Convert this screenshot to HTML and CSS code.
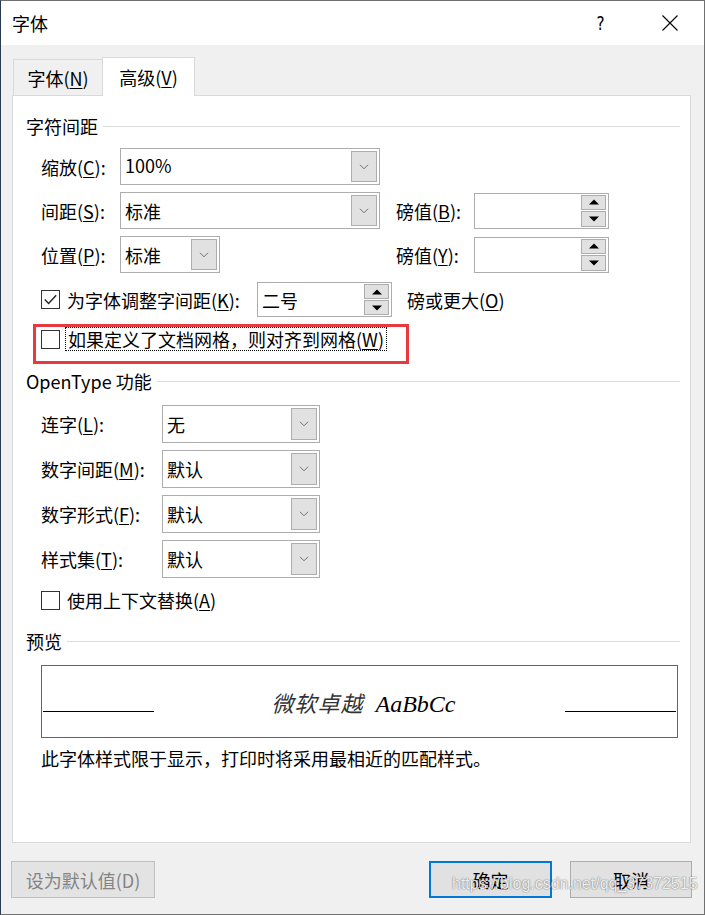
FILE: index.html
```html
<!DOCTYPE html>
<html lang="zh-CN">
<head>
<meta charset="utf-8">
<title>字体</title>
<link rel="stylesheet" href="styles.css">
</head>
<body>
<div class="window">
  <div class="titlebar">
    <span class="title">字体</span>
    <div class="caption-btns">
      <span class="cap-btn help">?</span>
      <span class="cap-btn"><svg width="16" height="16" viewBox="0 0 16 16"><path d="M0.5 0.5 L15.5 15.5 M15.5 0.5 L0.5 15.5" stroke="#000" stroke-width="1.1" fill="none"/></svg></span>
    </div>
  </div>
  <div class="client">
    <div class="tabs">
      <div class="tab">字体(<u>N</u>)</div>
      <div class="tab active">高级(<u>V</u>)</div>
    </div>
    <div class="panel">
      <div class="group-title">字符间距</div>
      <div class="grid1 ind">
        <span class="label">缩放(<u>C</u>):</span>
        <div class="combo"><span class="val edit">100%</span><span class="drop"><svg width="10" height="6" viewBox="0 0 10 6"><path d="M1 0.8 L5 4.8 L9 0.8" stroke="#707070" stroke-width="1" fill="none"/></svg></span></div>
        <span></span><span></span><span></span>

        <span class="label">间距(<u>S</u>):</span>
        <div class="combo"><span class="val">标准</span><span class="drop"><svg width="10" height="6" viewBox="0 0 10 6"><path d="M1 0.8 L5 4.8 L9 0.8" stroke="#707070" stroke-width="1" fill="none"/></svg></span></div>
        <span></span>
        <span class="label">磅值(<u>B</u>):</span>
        <div class="spin"><span class="val"></span><span class="spin-btns"><span class="sbtn"><svg width="10" height="6" viewBox="0 0 10 6"><path d="M0 5.5 L5 0.5 L10 5.5Z" fill="#000"/></svg></span><span class="sbtn"><svg width="10" height="6" viewBox="0 0 10 6"><path d="M0 0.5 L5 5.5 L10 0.5Z" fill="#000"/></svg></span></span></div>

        <span class="label">位置(<u>P</u>):</span>
        <div class="combo short"><span class="val">标准</span><span class="drop"><svg width="10" height="6" viewBox="0 0 10 6"><path d="M1 0.8 L5 4.8 L9 0.8" stroke="#707070" stroke-width="1" fill="none"/></svg></span></div>
        <span></span>
        <span class="label">磅值(<u>Y</u>):</span>
        <div class="spin"><span class="val"></span><span class="spin-btns"><span class="sbtn"><svg width="10" height="6" viewBox="0 0 10 6"><path d="M0 5.5 L5 0.5 L10 5.5Z" fill="#000"/></svg></span><span class="sbtn"><svg width="10" height="6" viewBox="0 0 10 6"><path d="M0 0.5 L5 5.5 L10 0.5Z" fill="#000"/></svg></span></span></div>
      </div>

      <div class="kern-row ind">
        <span class="checkbox"><svg width="17" height="17" viewBox="0 0 17 17"><path d="M2.8 8.6 L6.6 12.4 L14.2 4.2" stroke="#222" stroke-width="1.4" fill="none"/></svg></span>
        <span class="kern-label">为字体调整字间距(<u>K</u>):</span>
        <div class="spin kern"><span class="val">二号</span><span class="spin-btns"><span class="sbtn"><svg width="10" height="6" viewBox="0 0 10 6"><path d="M0 5.5 L5 0.5 L10 5.5Z" fill="#000"/></svg></span><span class="sbtn"><svg width="10" height="6" viewBox="0 0 10 6"><path d="M0 0.5 L5 5.5 L10 0.5Z" fill="#000"/></svg></span></span></div>
        <span class="after-spin">磅或更大(<u>O</u>)</span>
      </div>

      <div class="check-row snap ind">
        <span class="checkbox"></span>
        <span class="focus">如果定义了文档网格，则对齐到网格(<u>W</u>)</span>
      </div>

      <div class="group-title ot">OpenType 功能</div>
      <div class="grid2 ind">
        <span class="label">连字(<u>L</u>):</span>
        <div class="combo"><span class="val">无</span><span class="drop"><svg width="10" height="6" viewBox="0 0 10 6"><path d="M1 0.8 L5 4.8 L9 0.8" stroke="#707070" stroke-width="1" fill="none"/></svg></span></div>
        <span class="label">数字间距(<u>M</u>):</span>
        <div class="combo"><span class="val">默认</span><span class="drop"><svg width="10" height="6" viewBox="0 0 10 6"><path d="M1 0.8 L5 4.8 L9 0.8" stroke="#707070" stroke-width="1" fill="none"/></svg></span></div>
        <span class="label">数字形式(<u>F</u>):</span>
        <div class="combo"><span class="val">默认</span><span class="drop"><svg width="10" height="6" viewBox="0 0 10 6"><path d="M1 0.8 L5 4.8 L9 0.8" stroke="#707070" stroke-width="1" fill="none"/></svg></span></div>
        <span class="label">样式集(<u>T</u>):</span>
        <div class="combo"><span class="val">默认</span><span class="drop"><svg width="10" height="6" viewBox="0 0 10 6"><path d="M1 0.8 L5 4.8 L9 0.8" stroke="#707070" stroke-width="1" fill="none"/></svg></span></div>
      </div>

      <div class="check-row ctx ind">
        <span class="checkbox"></span>
        <span>使用上下文替换(<u>A</u>)</span>
      </div>

      <div class="group-title pv">预览</div>
      <div class="preview ind">
        <span class="pline"></span>
        <span class="ptext"><span class="pcjk">微软卓越</span><span class="plat">AaBbCc</span></span>
        <span class="pline"></span>
      </div>
      <div class="note ind">此字体样式限于显示，打印时将采用最相近的匹配样式。</div>

      <div class="annot"></div>
    </div>
    <div class="footer">
      <span class="btn disabled">设为默认值(D)</span>
      <span class="btn primary">确定</span>
      <span class="btn cancel">取消</span>
    </div>
  </div>
  <div class="watermark">https://blog.csdn.net/qq_37372515</div>
</div>
</body>
</html>
```
FILE: styles.css
```css
* { box-sizing: border-box; }
html, body { margin: 0; padding: 0; }
body {
  width: 705px;
  height: 915px;
  overflow: hidden;
  background: #f0f0f0;
  font-family: "Noto Sans CJK SC", "Noto Sans", sans-serif;
  font-size: 18px;
  line-height: 24px;
  color: #000;
}
u { text-decoration: underline; text-underline-offset: 2px; text-decoration-thickness: 1px; }

.window {
  position: relative;
  width: 705px;
  height: 915px;
  background: #f0f0f0;
  border: 1px solid #707070;
  border-left-color: #2a3a52;
  display: flex;
  flex-direction: column;
}
.titlebar {
  flex: none;
  height: 44px;
  background: #fff;
  display: flex;
  align-items: center;
}
.title { margin-left: 11px; }
.caption-btns { margin-left: auto; display: flex; height: 100%; }
.cap-btn {
  width: 69px;
  display: flex;
  align-items: center;
  justify-content: center;
}
.help { font-family: "DejaVu Sans", sans-serif; font-size: 19px; font-weight: normal; transform: scaleX(0.8); }

.client { flex: 1; display: flex; flex-direction: column; }
.tabs {
  height: 50px;
  display: flex;
  align-items: flex-end;
  padding-left: 12px;
  position: relative;
  z-index: 1;
}
.tab {
  width: 89px;
  height: 36px;
  border: 1px solid #d9d9d9;
  border-right: none;
  border-bottom: none;
  display: flex;
  align-items: center;
  justify-content: center;
}
.tab.active {
  width: 93px;
  height: 39px;
  margin-bottom: -1px;
  background: #fff;
  border-right: 1px solid #d9d9d9;
}

.panel {
  position: relative;
  margin-left: 11px;
  width: 679px;
  height: 748px;
  background: #fff;
  border: 1px solid #d9d9d9;
  padding: 0 10px 0 13px;
}
.group-title {
  display: flex;
  align-items: center;
  margin-top: 18px;
  height: 24px;
}
.group-title::after {
  content: "";
  flex: 1;
  height: 1px;
  background: #dcdcdc;
  margin-left: 5px;
}
.group-title.ot { margin-top: 18px; }
.group-title.pv { margin-top: 17px; }
.ind { margin-left: 15px; }

.grid1 {
  display: grid;
  grid-template-columns: 79px 260px 16px 78px 135px;
  grid-auto-rows: 37px;
  row-gap: 7px;
  align-items: center;
  margin-top: 10px;
}
.grid2 {
  display: grid;
  grid-template-columns: 121px 158px;
  grid-auto-rows: 38px;
  row-gap: 7px;
  align-items: center;
  margin-top: 12px;
}
.label { white-space: nowrap; }

.combo {
  height: 100%;
  border: 1px solid #adadad;
  background: #fff;
  display: flex;
  align-items: center;
  padding: 2px;
}
.combo.short { width: 100px; }
.combo .val { flex: 1; padding-left: 2px; white-space: nowrap; }
.combo .val.edit { margin-top: -4px; }
.drop {
  width: 26px;
  align-self: stretch;
  background: #e1e1e1;
  border: 1px solid #adadad;
  display: flex;
  align-items: center;
  justify-content: center;
}

.spin {
  height: 36px;
  border: 1px solid #adadad;
  background: #fff;
  display: flex;
  align-items: center;
  padding: 1px 2px 1px 0;
}
.spin .val { flex: 1; padding-left: 4px; white-space: nowrap; }
.spin-btns {
  width: 25px;
  align-self: stretch;
  display: flex;
  flex-direction: column;
  gap: 1px;
}
.sbtn {
  flex: 1;
  background: #e1e1e1;
  border: 1px solid #adadad;
  display: flex;
  align-items: center;
  justify-content: center;
}

.checkbox {
  flex: none;
  width: 19px;
  height: 19px;
  border: 1px solid #333;
  background: #fff;
  display: flex;
  align-items: center;
  justify-content: center;
}
.kern-row {
  display: flex;
  align-items: center;
  height: 35px;
  margin-top: 9px;
}
.kern-label { width: 190px; margin-left: 7px; white-space: nowrap; }
.spin.kern { width: 135px; height: 35px; }
.after-spin { margin-left: 15px; }

.check-row {
  display: flex;
  align-items: center;
  height: 24px;
}
.check-row.snap { margin-top: 10px; }
.check-row.ctx { margin-top: 10px; gap: 7px; }
.focus {
  margin-left: 5px;
  border: 1px dotted #000;
  padding: 0 2px;
  line-height: 22px;
}
.annot {
  position: absolute;
  left: 20px;
  top: 228px;
  width: 376px;
  height: 40px;
  border: 3px solid #e8393e;
}

.preview {
  margin-top: 12px;
  width: 637px;
  height: 73px;
  border: 1px solid #646464;
  padding: 0 1px 25px 1px;
  display: flex;
  justify-content: space-between;
  align-items: flex-end;
}
.pline { width: 111px; height: 1px; background: #000; }
.ptext { margin-bottom: -4px; padding-left: 8px; font-style: italic; line-height: 24px; white-space: nowrap; display: flex; align-items: baseline; }
.pcjk { font-family: "Noto Sans CJK SC", sans-serif; font-size: 22px; font-weight: 400; color: #333; letter-spacing: 1px; }
.plat { font-family: "Liberation Serif", serif; font-size: 24px; margin-left: 12px; }
.note { margin-top: 8px; }

.footer {
  display: flex;
  margin-top: 18px;
  height: 37px;
  padding: 0 12px 0 10px;
}
.btn {
  height: 37px;
  display: flex;
  align-items: center;
  justify-content: center;
  background: #e1e1e1;
  border: 1px solid #adadad;
}
.btn.disabled { width: 144px; color: #838383; background: #e3e3e3; border-color: #bfbfbf; }
.btn.primary { width: 123px; margin-left: auto; border: 2px solid #0078d7; }
.btn.cancel { width: 122px; margin-left: 18px; }

.watermark {
  position: absolute;
  left: 451px;
  top: 872px;
  font-family: "Liberation Sans", Arial, sans-serif;
  font-size: 16px;
  line-height: 22px;
  color: rgba(255, 255, 255, 0.9);
  text-shadow: 0 0 1px rgba(0, 0, 0, 0.5), 0 0 2px rgba(0, 0, 0, 0.25);
  white-space: nowrap;
}
```
